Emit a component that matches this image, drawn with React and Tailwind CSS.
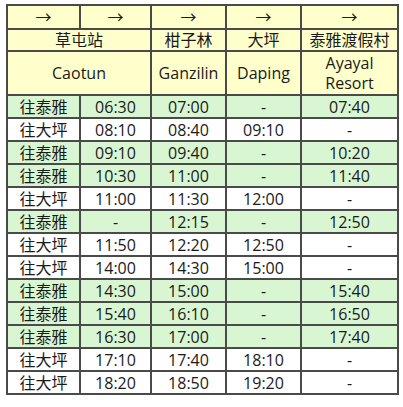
import React from 'react';

const ROWS = [
  ['往泰雅', '06:30', '07:00', '-', '07:40', true],
  ['往大坪', '08:10', '08:40', '09:10', '-', false],
  ['往泰雅', '09:10', '09:40', '-', '10:20', true],
  ['往泰雅', '10:30', '11:00', '-', '11:40', true],
  ['往大坪', '11:00', '11:30', '12:00', '-', false],
  ['往泰雅', '-', '12:15', '-', '12:50', true],
  ['往大坪', '11:50', '12:20', '12:50', '-', false],
  ['往大坪', '14:00', '14:30', '15:00', '-', false],
  ['往泰雅', '14:30', '15:00', '-', '15:40', true],
  ['往泰雅', '15:40', '16:10', '-', '16:50', true],
  ['往泰雅', '16:30', '17:00', '-', '17:40', true],
  ['往大坪', '17:10', '17:40', '18:10', '-', false],
  ['往大坪', '18:20', '18:50', '19:20', '-', false],
];

const cell = 'border-2 border-[#4a4a4a] text-center p-0 align-middle';

export default function App() {
  return (
    <div
      className="w-[403px] h-[407px] bg-white pl-[6px] pt-[4px] text-[16px] text-[#1a1a1a] leading-[20px]"
      style={{ fontFamily: '"Open Sans", "Noto Sans CJK TC", sans-serif' }}
    >
      <table className="border-collapse table-fixed w-[391px]">
        <colgroup>
          <col className="w-[73px]" />
          <col className="w-[71px]" />
          <col className="w-[75px]" />
          <col className="w-[75px]" />
          <col className="w-[97px]" />
        </colgroup>
        <thead className="bg-[#ffffcc]">
          <tr className="h-[24px]">
            {[0, 1, 2, 3, 4].map((i) => (
              <td key={i} className={cell}>→</td>
            ))}
          </tr>
          <tr className="h-[22px]">
            <td colSpan={2} className={cell}>草屯站</td>
            <td className={cell}>柑子林</td>
            <td className={cell}>大坪</td>
            <td className={cell}>泰雅渡假村</td>
          </tr>
          <tr className="h-[44px]">
            <td colSpan={2} className={cell}>Caotun</td>
            <td className={cell}>Ganzilin</td>
            <td className={cell}>Daping</td>
            <td className={`${cell} leading-[20px]`}>Ayayal<br />Resort</td>
          </tr>
        </thead>
        <tbody>
          {ROWS.map((r, i) => (
            <tr key={i} className={`h-[23px] ${r[5] ? 'bg-[#d9f6d2]' : 'bg-white'}`}>
              {r.slice(0, 5).map((v, j) => (
                <td key={j} className={cell}>{v}</td>
              ))}
            </tr>
          ))}
        </tbody>
      </table>
    </div>
  );
}
